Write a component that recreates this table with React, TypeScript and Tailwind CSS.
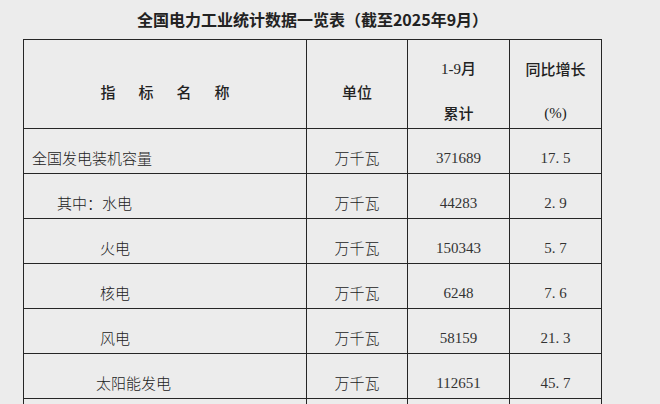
import React from 'react';

const cjk = "font-['Noto_Sans_CJK_SC',sans-serif]";
const serif = "font-['Liberation_Serif','Noto_Sans_CJK_SC',serif]";

type Row = { name: string; indent: string; unit: string; total: string; growth: string };

const rows: Row[] = [
  { name: '全国发电装机容量', indent: 'pl-[8px]', unit: '万千瓦', total: '371689', growth: '17.5' },
  { name: '其中：水电', indent: 'pl-[33px]', unit: '万千瓦', total: '44283', growth: '2.9' },
  { name: '火电', indent: 'pl-[76px]', unit: '万千瓦', total: '150343', growth: '5.7' },
  { name: '核电', indent: 'pl-[76px]', unit: '万千瓦', total: '6248', growth: '7.6' },
  { name: '风电', indent: 'pl-[76px]', unit: '万千瓦', total: '58159', growth: '21.3' },
  { name: '太阳能发电', indent: 'pl-[72px]', unit: '万千瓦', total: '112651', growth: '45.7' },
  { name: '', indent: 'pl-[8px]', unit: '', total: '', growth: '' },
];

// SimSun-style period: takes a full half-width cell
const Num: React.FC<{ value: string }> = ({ value }) => {
  const [a, b] = value.split('.');
  if (b === undefined) return <>{a}</>;
  return (
    <>
      {a}
      <span className="inline-block w-[7.5px] text-left">.</span>
      {b}
    </>
  );
};

const cell = 'border-r border-b border-[#262626]';

export default function App() {
  return (
    <div className="h-[404px] w-[660px] overflow-hidden bg-[#ececec] text-[#222]">
      <div className="pl-[23px]">
        <div className={`flex h-[39px] w-[579px] items-center justify-center pb-[2px] text-[16px] font-semibold ${cjk}`}>
          全国电力工业统计数据一览表（截至2025年9月）
        </div>

        <div className="grid w-[579px] grid-cols-[283px_101px_102px_92px] border-l border-t border-[#262626]">
          {/* header */}
          <div className={`${cell} flex h-[89px] items-center justify-center gap-[23px] pt-4 text-[15px] font-medium ${cjk}`}>
            <span>指</span>
            <span>标</span>
            <span>名</span>
            <span>称</span>
          </div>
          <div className={`${cell} flex h-[89px] items-center justify-center pt-4 text-[15px] font-medium ${cjk}`}>
            单位
          </div>
          <div className={`${cell} flex h-[89px] flex-col items-center gap-[24px] pt-[19px] text-[15px] leading-[20px] font-medium ${serif}`}>
            <span>1-9月</span>
            <span className={cjk}>累计</span>
          </div>
          <div className={`${cell} flex h-[89px] flex-col items-center gap-[24px] pt-[19px] text-[15px] leading-[20px] font-medium ${cjk}`}>
            <span>同比增长</span>
            <span className={serif}>(%)</span>
          </div>

          {rows.map((r, i) => (
            <React.Fragment key={i}>
              <div className={`${cell} flex h-[45px] items-end pb-[5px] ${r.indent} text-[15px] leading-[20px] font-light ${cjk}`}>
                {r.name}
              </div>
              <div className={`${cell} flex h-[45px] items-end justify-center pb-[5px] text-[15px] leading-[20px] font-light ${cjk}`}>
                {r.unit}
              </div>
              <div className={`${cell} flex h-[45px] items-end justify-center pb-[5px] text-[15px] leading-[20px] text-[#333] ${serif}`}>
                {r.total}
              </div>
              <div className={`${cell} flex h-[45px] items-end justify-center pb-[5px] text-[15px] leading-[20px] text-[#333] ${serif}`}>
                <Num value={r.growth} />
              </div>
            </React.Fragment>
          ))}
        </div>
      </div>
    </div>
  );
}
